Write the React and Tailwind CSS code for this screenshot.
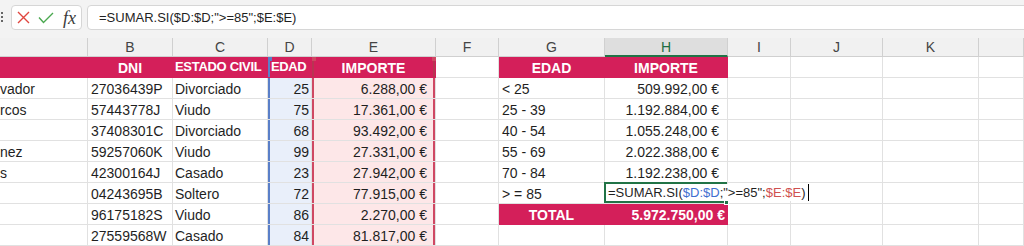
import React from 'react';
import { twMerge } from 'tailwind-merge';

const letters = ['', 'B', 'C', 'D', 'E', 'F', 'G', 'H', 'I', 'J', 'K', ''];

const rows = [
  { a: 'vador', b: '27036439P', c: 'Divorciado', d: 25, e: '6.288,00 €', g: '< 25', h: '509.992,00 €' },
  { a: 'rcos', b: '57443778J', c: 'Viudo', d: 75, e: '17.361,00 €', g: '25 - 39', h: '1.192.884,00 €' },
  { a: '', b: '37408301C', c: 'Divorciado', d: 68, e: '93.492,00 €', g: '40 - 54', h: '1.055.248,00 €' },
  { a: 'nez', b: '59257060K', c: 'Viudo', d: 99, e: '27.331,00 €', g: '55 - 69', h: '2.022.388,00 €' },
  { a: 's', b: '42300164J', c: 'Casado', d: 23, e: '27.942,00 €', g: '70 - 84', h: '1.192.238,00 €' },
  { a: '', b: '04243695B', c: 'Soltero', d: 72, e: '77.915,00 €', g: '> = 85', edit: true },
  { a: '', b: '96175182S', c: 'Viudo', d: 86, e: '2.270,00 €', total: true },
  { a: '', b: '27559568W', c: 'Casado', d: 84, e: '81.817,00 €' },
];

function Cell({ className = '', children }) {
  return (
    <div
      className={twMerge(
        'h-[21px] border-r border-b border-[#e1e1e1] overflow-hidden whitespace-nowrap text-[14px] leading-[23px] text-[#1f1f1f]',
        className
      )}
    >
      {children}
    </div>
  );
}

// celdas de la columna D (azul) y E (rosa) marcadas por la fórmula
const dCls = 'bg-[#e9effa] shadow-[inset_2px_0_0_#5a7fc8] text-right pr-[2px]';
const eCls = 'bg-[#fde7e8] shadow-[inset_2px_0_0_#cf4863,inset_-2px_0_0_#cf4863] text-right pr-[8px]';
const head = 'bg-[#d41f5a] border-[#d41f5a] text-white font-bold text-center';

function EditCell() {
  return (
    <div className="relative h-[21px] border-r border-b border-[#e1e1e1] z-10">
      <div className="absolute -top-[1px] -left-[1px] right-0 bottom-0 border-2 border-[#217346]" />
      <div className="absolute right-[-2px] bottom-[-2px] w-[5px] h-[5px] bg-[#217346] border border-white" />
      <div className="absolute left-[2px] top-[1px] bottom-[2px] bg-white pl-[1px] pr-[3px] flex items-center whitespace-nowrap text-[13px] leading-[23px] text-[#1f1f1f]">
        <span>=SUMAR.SI(</span>
        <span className="text-[#3f6fd0]">$D:$D</span>
        <span>;"&gt;=85";</span>
        <span className="text-[#d0504f]">$E:$E</span>
        <span>)</span>
        <span className="ml-[2px] w-[1px] h-[17px] bg-black" />
      </div>
    </div>
  );
}

export default function App() {
  return (
    <div className="w-[1024px] h-[246px] overflow-hidden bg-white font-['Liberation_Sans',Arial,sans-serif]">
      {/* barra de fórmulas */}
      <div className="h-[38px] bg-[#f3f3f3] flex items-start pt-[5px]">
        <div className="w-[11px] flex flex-col pl-[1px] pt-[7px] gap-[2px]">
          <div className="w-[2px] h-[2px] bg-[#666]" />
          <div className="w-[2px] h-[2px] bg-[#666]" />
          <div className="w-[2px] h-[2px] bg-[#666]" />
        </div>
        <div className="w-[71px] h-[25px] bg-white border border-[#d6d6d6] rounded-[4px] flex items-center">
          <svg width="13" height="13" viewBox="0 0 13 13" className="ml-[5px]">
            <path d="M1 1 12 12M12 1 1 12" stroke="#e0463f" strokeWidth="1.4" fill="none" />
          </svg>
          <svg width="16" height="12" viewBox="0 0 16 12" className="ml-[8px]">
            <path d="M1 5.5 5.5 10.5 15 1" stroke="#4aa84f" strokeWidth="1.4" fill="none" />
          </svg>
          <span className="ml-[9px] font-['Liberation_Serif',serif] italic text-[18px] leading-none text-[#3a3a3a]">fx</span>
        </div>
        <div className="ml-[5px] flex-1 -mr-[6px] h-[25px] bg-white border border-[#d6d6d6] rounded-[4px] pl-[11px] text-[13px] leading-[23px] text-[#1f1f1f] whitespace-nowrap">
          =SUMAR.SI($D:$D;"&gt;=85";$E:$E)
        </div>
      </div>

      <div className="grid grid-cols-[88px_85px_95px_44px_124px_63px_106px_123px_63px_92px_96px_45px]">
        {/* encabezados de columna */}
        {letters.map((l, i) =>
          l === 'H' ? (
            <div key={i} className="h-[19px] bg-[#dedede] border-r border-[#d0d0d0] border-b-2 border-b-[#217346] text-center text-[14px] leading-[18px] text-[#1e6e42]">
              {l}
            </div>
          ) : (
            <div key={i} className="h-[19px] bg-[#f1f1f1] border-r border-b border-[#d0d0d0] text-center text-[14px] leading-[19px] text-[#444]">
              {l}
            </div>
          )
        )}

        {/* fila de títulos */}
        <Cell className={head} />
        <Cell className={head}>DNI</Cell>
        <Cell className={twMerge(head, 'text-left pl-[2px] text-[13px] tracking-[-0.3px]')}>ESTADO CIVIL</Cell>
        <div className="relative">
          <Cell className={twMerge(head, 'shadow-[inset_2px_0_0_#5a7fc8] pl-[3px] text-left text-[13px] tracking-[-0.4px]')}>EDAD</Cell>
          <div className="absolute top-0 left-0 w-[4px] h-[4px] bg-[#5a7fc8]" />
        </div>
        <div className="relative">
          <Cell className={twMerge(head, 'shadow-[inset_2px_0_0_#b83452,inset_-2px_0_0_#b83452]')}>IMPORTE</Cell>
          <div className="absolute top-0 left-0 w-[4px] h-[4px] bg-[#cf4863]" />
          <div className="absolute top-0 right-0 w-[4px] h-[4px] bg-[#cf4863]" />
        </div>
        <Cell />
        <Cell className={head}>EDAD</Cell>
        <Cell className={head}>IMPORTE</Cell>
        <Cell />
        <Cell />
        <Cell />
        <Cell />

        {/* datos */}
        {rows.map((r, i) => (
          <React.Fragment key={i}>
            <Cell className="pl-0">{r.a}</Cell>
            <Cell className="pl-[3px]">{r.b}</Cell>
            <Cell className="pl-[2px]">{r.c}</Cell>
            <Cell className={dCls}>{r.d}</Cell>
            <Cell className={eCls}>{r.e}</Cell>
            <Cell />
            {r.total ? (
              <>
                <Cell className={head}>TOTAL</Cell>
                <Cell className={twMerge(head, 'text-right pr-[2px]')}>5.972.750,00 €</Cell>
              </>
            ) : (
              <>
                <Cell className="pl-[3px]">{r.g}</Cell>
                {r.edit ? <EditCell /> : <Cell className="text-right pr-[8px]">{r.h}</Cell>}
              </>
            )}
            <Cell />
            <Cell />
            <Cell />
            <Cell />
          </React.Fragment>
        ))}
      </div>
    </div>
  );
}
